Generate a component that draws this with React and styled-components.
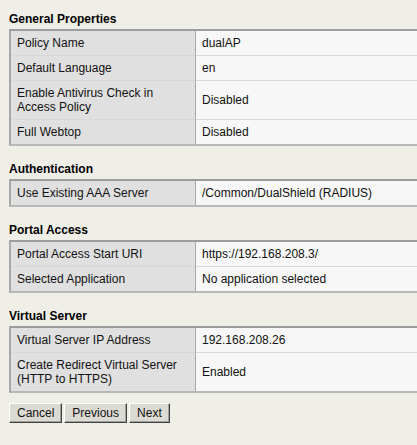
import React from "react";
import styled, { createGlobalStyle } from "styled-components";

const GlobalStyle = createGlobalStyle`
  html, body {
    margin: 0;
    padding: 0;
    background: #efeee7;
    overflow: hidden;
  }
  body {
    font-family: "Liberation Sans", Arial, sans-serif;
    font-size: 12px;
    color: #111;
  }
`;

const Page = styled.div`
  padding: 12px 0 0 9px;
`;

const Section = styled.section`
  margin-bottom: 16px;
`;

const Heading = styled.h3`
  margin: 0 0 3px;
  font-size: 12px;
  line-height: 14px;
  font-weight: bold;
  color: #000;
`;

const Table = styled.table`
  width: 100%;
  border-collapse: separate;
  border-spacing: 0;
  border-top: 2px solid #9c9c9c;
  border-left: 2px solid #a8a8a8;
  border-bottom: 2px solid #b8b8b8;
`;

const Row = styled.tr`
  &:not(:last-child) td {
    border-bottom: 1px solid #d8d8d8;
  }
`;

const Label = styled.td`
  width: 171px;
  padding: 5px 7px 5px 6px;
  line-height: 14px;
  background: #e0e0e0;
  border-right: 1px solid #a8a8a8;
  vertical-align: middle;
`;

const Value = styled.td`
  padding: 5px 6px;
  line-height: 14px;
  background: #f7f7f7;
  vertical-align: middle;
`;

const Buttons = styled.div`
  display: flex;
  gap: 2px;
  margin-top: -6px;
`;

const Button = styled.button`
  font-family: "Liberation Sans", Arial, sans-serif;
  font-size: 12px;
  height: 20px;
  padding: 0 7px;
  color: #111;
  background: #dcdbd3;
  border: 1px solid;
  border-color: #ffffff #404040 #404040 #ffffff;
  box-shadow: inset -1px -1px 0 #a0a0a0;
  cursor: pointer;
`;

const sections = [
  {
    title: "General Properties",
    rows: [
      ["Policy Name", "dualAP"],
      ["Default Language", "en"],
      ["Enable Antivirus Check in Access Policy", "Disabled"],
      ["Full Webtop", "Disabled"],
    ],
  },
  {
    title: "Authentication",
    rows: [["Use Existing AAA Server", "/Common/DualShield (RADIUS)"]],
  },
  {
    title: "Portal Access",
    rows: [
      ["Portal Access Start URI", "https://192.168.208.3/"],
      ["Selected Application", "No application selected"],
    ],
  },
  {
    title: "Virtual Server",
    rows: [
      ["Virtual Server IP Address", "192.168.208.26"],
      ["Create Redirect Virtual Server (HTTP to HTTPS)", "Enabled"],
    ],
  },
];

export default function App() {
  return (
    <Page>
      <GlobalStyle />
      {sections.map((section) => (
        <Section key={section.title}>
          <Heading>{section.title}</Heading>
          <Table>
            <tbody>
              {section.rows.map(([label, value]) => (
                <Row key={label}>
                  <Label>{label}</Label>
                  <Value>{value}</Value>
                </Row>
              ))}
            </tbody>
          </Table>
        </Section>
      ))}
      <Buttons>
        <Button>Cancel</Button>
        <Button>Previous</Button>
        <Button>Next</Button>
      </Buttons>
    </Page>
  );
}
